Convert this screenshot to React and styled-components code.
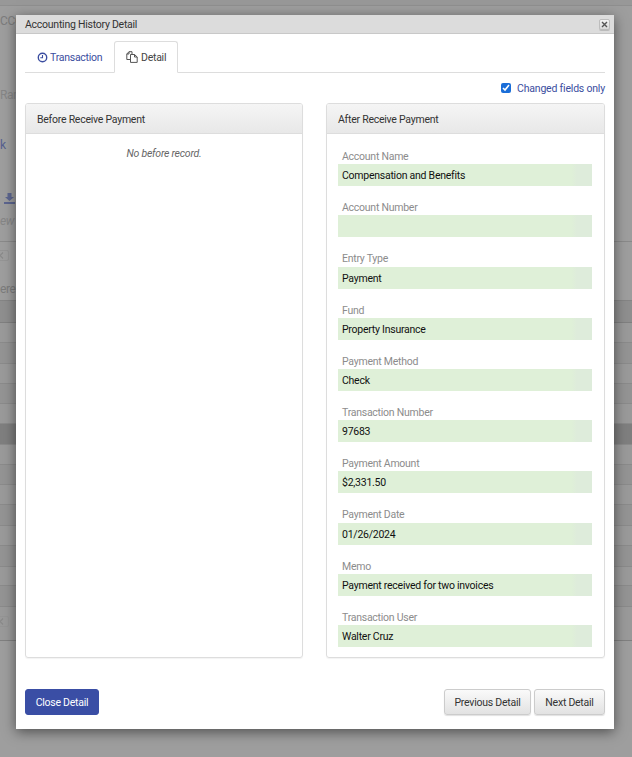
import React from "react";
import styled, { createGlobalStyle } from "styled-components";

const FONT = `"Roboto", "Liberation Sans", sans-serif`;
const TEXT = `font-size: 10.5px; letter-spacing: -0.25px;`;

const Global = createGlobalStyle`
  html, body { margin: 0; padding: 0; height: 100%; background: #9e9e9e; }
  body { font-family: ${FONT}; font-size: 10.5px; color: #333; }
`;

const Page = styled.div`
  position: relative;
  width: 632px;
  height: 757px;
  overflow: hidden;
  background: #9e9e9e;
`;

const Backdrop = styled.div`
  display: flex;
  flex-direction: column;
  width: 632px;
`;

const BackStrip = styled.div`
  height: ${(p) => p.$h}px;
  box-sizing: border-box;
  border-bottom: ${(p) => (p.$line ? `1px solid ${p.$line}` : "none")};
  background: ${(p) => p.$bg || "transparent"};
  color: ${(p) => p.$color || "#7c7c7c"};
  font-size: 12px;
  letter-spacing: -0.4px;
  font-style: ${(p) => (p.$italic ? "italic" : "normal")};
  line-height: ${(p) => p.$lh || p.$h}px;
  white-space: nowrap;
`;

const BackShift = styled.span`
  display: inline-block;
  margin-left: ${(p) => p.$x}px;
`;

const BackPager = styled.div`
  display: flex;
  align-items: center;
  justify-content: center;
  box-sizing: border-box;
  width: 16px;
  height: 11px;
  margin-left: -7px;
  position: relative;
  top: ${(p) => p.$top}px;
  border: 1px solid #959595;
  border-radius: 2px;
`;

const Modal = styled.div`
  position: absolute;
  left: 16px;
  top: 15px;
  width: 598px;
  height: 714px;
  background: #fff;
  box-shadow: 0 3px 12px rgba(0, 0, 0, 0.5);
  display: flex;
  flex-direction: column;
`;

const TitleBar = styled.div`
  flex: none;
  height: 19px;
  box-sizing: border-box;
  padding: 0 4px 0 9px;
  background: #dcdcdc;
  border-bottom: 1px solid #c8c8c8;
  display: flex;
  align-items: center;
  justify-content: space-between;
`;

const Title = styled.span`
  ${TEXT}
  color: #333;
  line-height: 18px;
  padding-top: 1px;
`;

const CloseX = styled.span`
  width: 11px;
  height: 11px;
  box-sizing: border-box;
  border: 1px solid #bdbdbd;
  border-radius: 2px;
  background: linear-gradient(#f4f4f4, #d8d8d8);
  box-shadow: 0 1px 0 #bbb;
  display: flex;
  align-items: center;
  justify-content: center;
`;

const Body = styled.div`
  flex: 1;
  display: flex;
  flex-direction: column;
  padding: 7px 9px 14px;
  min-height: 0;
`;

const Tabs = styled.div`
  flex: none;
  display: flex;
  height: 32px;
  box-sizing: border-box;
  border-bottom: 1px solid #ddd;
`;

const Tab = styled.div`
  box-sizing: border-box;
  height: 32px;
  width: ${(p) => p.$w}px;
  padding-left: 11px;
  display: flex;
  align-items: center;
  gap: ${(p) => p.$gap}px;
  ${TEXT}
  color: ${(p) => (p.$active ? "#444" : "#3b4da0")};
  background: ${(p) => (p.$active ? "#fff" : "transparent")};
  border: 1px solid ${(p) => (p.$active ? "#ddd" : "transparent")};
  border-bottom-color: ${(p) => (p.$active ? "#fff" : "transparent")};
  border-radius: 3px 3px 0 0;
`;

const OptionRow = styled.label`
  flex: none;
  height: 30px;
  display: flex;
  align-items: center;
  justify-content: flex-end;
  gap: 6px;
  color: #3b4da0;
  ${TEXT}
  letter-spacing: -0.2px;
`;

const Check = styled.input`
  width: 10px;
  height: 10px;
  margin: 0;
  accent-color: #1a6ed8;
`;

const Columns = styled.div`
  flex: none;
  display: grid;
  grid-template-columns: 278px 279px;
  column-gap: 23px;
  height: 555px;
`;

const Panel = styled.section`
  box-sizing: border-box;
  border: 1px solid #ddd;
  border-radius: 3px;
  box-shadow: 0 1px 1px rgba(0, 0, 0, 0.05);
  display: flex;
  flex-direction: column;
  overflow: hidden;
`;

const PanelHead = styled.header`
  flex: none;
  height: 30px;
  box-sizing: border-box;
  padding: 1px 11px 0;
  display: flex;
  align-items: center;
  background: linear-gradient(#f5f5f5, #e8e8e8);
  border-bottom: 1px solid #ddd;
  ${TEXT}
  color: #333;
`;

const Empty = styled.p`
  margin: 13px 0 0;
  text-align: center;
  font-style: italic;
  ${TEXT}
  line-height: 14px;
  color: #666;
`;

const Fields = styled.div`
  padding: 15px 12px 0 11px;
`;

const Field = styled.div`
  margin-bottom: 14px;
`;

const Label = styled.div`
  padding: 1px 0 0 4px;
  ${TEXT}
  line-height: 14.2px;
  color: #8c8c8c;
`;

const Value = styled.div`
  height: 22px;
  box-sizing: border-box;
  padding: 1px 0 0 4px;
  background: linear-gradient(to right, #dff0d8 92%, #deecdb 94%);
  ${TEXT}
  line-height: 22px;
  color: #111;
`;

const Footer = styled.div`
  margin-top: auto;
  display: flex;
  align-items: center;
`;

const Primary = styled.button`
  height: 26px;
  width: 74px;
  padding: 1px 0 0;
  border: 1px solid #3a4ea5;
  border-radius: 3px;
  background: #3a4ea5;
  color: #fff;
  font-family: ${FONT};
  ${TEXT}
`;

const Secondary = styled.button`
  height: 26px;
  width: ${(p) => p.$w}px;
  margin-left: ${(p) => p.$ml}px;
  padding: 1px 0 0;
  border: 1px solid #ccc;
  border-radius: 3px;
  background: linear-gradient(#fafafa, #e2e2e2);
  box-shadow: 0 1px 1px rgba(0, 0, 0, 0.12);
  color: #333;
  font-family: ${FONT};
  ${TEXT}
`;

const ClockIcon = () => (
  <svg width="11" height="11" viewBox="0 0 12 12" fill="none" stroke="#3b4da0" strokeWidth="1.5">
    <circle cx="6" cy="6" r="4.6" />
    <path d="M6 3.2V6.2H3.6" strokeWidth="1.2" />
  </svg>
);

const FilesIcon = () => (
  <svg width="12" height="12" viewBox="0 0 12 12" fill="none" stroke="#555" strokeWidth="1">
    <path d="M4.5 8.5H.8V3L3 .7H6V3.2" />
    <path d="M3 .7V3H.8" />
    <path d="M4.5 3.5H8.5L11.2 6V11.4H4.5Z" />
    <path d="M8.5 3.5V6H11.2" />
  </svg>
);

const XIcon = () => (
  <svg width="7" height="7" viewBox="0 0 7 7" stroke="#555" strokeWidth="1.4">
    <path d="M1 1L6 6M6 1L1 6" />
  </svg>
);

const DownloadIcon = () => (
  <svg width="11" height="11" viewBox="0 0 11 11" fill="#5d6690">
    <path d="M3.5 0H7.5V4H10L5.5 8L1 4H3.5Z" />
    <path d="M0 9H11V11H0Z" />
  </svg>
);

const ChevronIcon = () => (
  <svg width="5" height="7" viewBox="0 0 5 7" fill="none" stroke="#8a8a8a" strokeWidth="1.2">
    <path d="M4 .5L1 3.5L4 6.5" />
  </svg>
);

const LIGHT = "#9a9a9a";
const DARK = "#949494";
const rowLines = [
  [LIGHT, 20], [DARK, 21], [LIGHT, 20], [DARK, 20], [LIGHT, 20],
  ["#7f7f7f", 21], [LIGHT, 20], [DARK, 20], [LIGHT, 20], [DARK, 21],
  [LIGHT, 20], [DARK, 21], [LIGHT, 19], [DARK, 21],
];

const fields = [
  ["Account Name", "Compensation and Benefits"],
  ["Account Number", ""],
  ["Entry Type", "Payment"],
  ["Fund", "Property Insurance"],
  ["Payment Method", "Check"],
  ["Transaction Number", "97683"],
  ["Payment Amount", "$2,331.50"],
  ["Payment Date", "01/26/2024"],
  ["Memo", "Payment received for two invoices"],
  ["Transaction User", "Walter Cruz"],
];

export default function App() {
  return (
    <>
      <Global />
      <Page>
        <Backdrop>
          <BackStrip $h={6} $bg="#989898" $line="#8f8f8f" />
          <BackStrip $h={30} $lh={30}>CCO</BackStrip>
          <BackStrip $h={44} />
          <BackStrip $h={30} $lh={30} $color="#868686">Ran</BackStrip>
          <BackStrip $h={20} />
          <BackStrip $h={30} $lh={30} $color="#56608f">k</BackStrip>
          <BackStrip $h={30} />
          <BackStrip $h={20} $lh={20}><BackShift $x={4}><DownloadIcon /></BackShift></BackStrip>
          <BackStrip $h={22} $lh={22} $italic $color="#868686">ew</BackStrip>
          <BackStrip $h={10} $line="#8a8a8a" />
          <BackStrip $h={30}><BackPager $top={8}><ChevronIcon /></BackPager></BackStrip>
          <BackStrip $h={29} $lh={34} $color="#7c7c7c" $line="#858585">ere</BackStrip>
          <BackStrip $h={22} $bg="#8f8f8f" $line="#808080" />
          {rowLines.map(([bg, h], i) => (
            <BackStrip key={i} $h={h} $bg={bg} $line="#8b8b8b" />
          ))}
          <BackStrip $h={34} $line="#808080" $bg={LIGHT}><BackPager $top={9}><ChevronIcon /></BackPager></BackStrip>
        </Backdrop>
        <Modal>
          <TitleBar>
            <Title>Accounting History Detail</Title>
            <CloseX><XIcon /></CloseX>
          </TitleBar>
          <Body>
            <Tabs>
              <Tab $w={89} $gap={2}><ClockIcon />Transaction</Tab>
              <Tab $w={64} $active $gap={3}><FilesIcon />Detail</Tab>
            </Tabs>
            <OptionRow>
              <Check type="checkbox" checked readOnly />
              Changed fields only
            </OptionRow>
            <Columns>
              <Panel>
                <PanelHead>Before Receive Payment</PanelHead>
                <Empty>No before record.</Empty>
              </Panel>
              <Panel>
                <PanelHead>After Receive Payment</PanelHead>
                <Fields>
                  {fields.map(([label, value]) => (
                    <Field key={label}>
                      <Label>{label}</Label>
                      <Value>{value}</Value>
                    </Field>
                  ))}
                </Fields>
              </Panel>
            </Columns>
            <Footer>
              <Primary>Close Detail</Primary>
              <Secondary $w={87} $ml={345}>Previous Detail</Secondary>
              <Secondary $w={71} $ml={3}>Next Detail</Secondary>
            </Footer>
          </Body>
        </Modal>
      </Page>
    </>
  );
}
